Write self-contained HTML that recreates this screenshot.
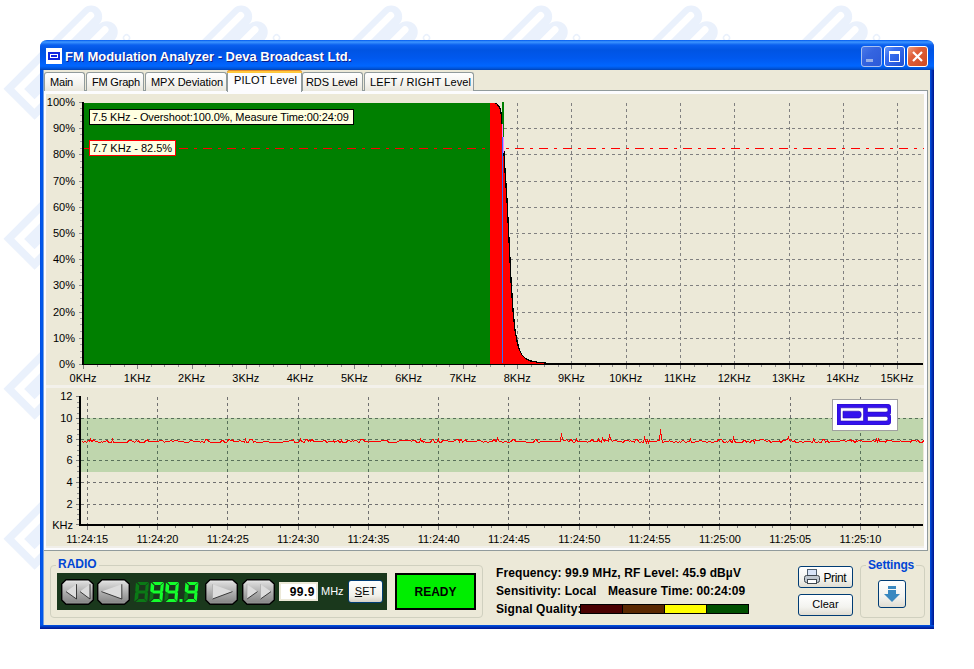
<!DOCTYPE html><html><head><meta charset="utf-8"><style>
*{margin:0;padding:0;box-sizing:border-box}
html,body{width:974px;height:669px;overflow:hidden;background:#fff;font-family:"Liberation Sans",sans-serif;font-size:11px;color:#000}
.ab{position:absolute}
.t{position:absolute;white-space:nowrap;line-height:1}
</style></head><body>
<svg class="ab" style="left:0;top:0" width="974" height="669"><g transform="translate(3.5,88.7) rotate(-45)"><path d="M0 0 H60 V44 H0 Z M7.6 7.6 V36 H56 V7.6 Z" fill-rule="evenodd" fill="#EAF1FC"/><path d="M14.5 14.8 H47 Q53 14.8 53 22 Q53 29.4 47 29.4 H14.5 Z" fill="#EAF1FC"/><path d="M56 0 H113 A11 11 0 0 1 113 22 A11 11 0 0 1 113 44 H56 Z M63 6.3 V13.3 H113.5 A3.5 3.5 0 0 0 113.5 6.3 Z M63 26.5 V33.5 H113.5 A3.5 3.5 0 0 0 113.5 26.5 Z" fill-rule="evenodd" fill="#EAF1FC"/><circle cx="123" cy="51" r="3" fill="none" stroke="#EAF1FC" stroke-width="1.5"/></g><g transform="translate(3.5,238.7) rotate(-45)"><path d="M0 0 H60 V44 H0 Z M7.6 7.6 V36 H56 V7.6 Z" fill-rule="evenodd" fill="#EAF1FC"/><path d="M14.5 14.8 H47 Q53 14.8 53 22 Q53 29.4 47 29.4 H14.5 Z" fill="#EAF1FC"/><path d="M56 0 H113 A11 11 0 0 1 113 22 A11 11 0 0 1 113 44 H56 Z M63 6.3 V13.3 H113.5 A3.5 3.5 0 0 0 113.5 6.3 Z M63 26.5 V33.5 H113.5 A3.5 3.5 0 0 0 113.5 26.5 Z" fill-rule="evenodd" fill="#EAF1FC"/><circle cx="123" cy="51" r="3" fill="none" stroke="#EAF1FC" stroke-width="1.5"/></g><g transform="translate(3.5,388.7) rotate(-45)"><path d="M0 0 H60 V44 H0 Z M7.6 7.6 V36 H56 V7.6 Z" fill-rule="evenodd" fill="#EAF1FC"/><path d="M14.5 14.8 H47 Q53 14.8 53 22 Q53 29.4 47 29.4 H14.5 Z" fill="#EAF1FC"/><path d="M56 0 H113 A11 11 0 0 1 113 22 A11 11 0 0 1 113 44 H56 Z M63 6.3 V13.3 H113.5 A3.5 3.5 0 0 0 113.5 6.3 Z M63 26.5 V33.5 H113.5 A3.5 3.5 0 0 0 113.5 26.5 Z" fill-rule="evenodd" fill="#EAF1FC"/><circle cx="123" cy="51" r="3" fill="none" stroke="#EAF1FC" stroke-width="1.5"/></g><g transform="translate(3.5,538.7) rotate(-45)"><path d="M0 0 H60 V44 H0 Z M7.6 7.6 V36 H56 V7.6 Z" fill-rule="evenodd" fill="#EAF1FC"/><path d="M14.5 14.8 H47 Q53 14.8 53 22 Q53 29.4 47 29.4 H14.5 Z" fill="#EAF1FC"/><path d="M56 0 H113 A11 11 0 0 1 113 22 A11 11 0 0 1 113 44 H56 Z M63 6.3 V13.3 H113.5 A3.5 3.5 0 0 0 113.5 6.3 Z M63 26.5 V33.5 H113.5 A3.5 3.5 0 0 0 113.5 26.5 Z" fill-rule="evenodd" fill="#EAF1FC"/><circle cx="123" cy="51" r="3" fill="none" stroke="#EAF1FC" stroke-width="1.5"/></g><g transform="translate(153.5,88.7) rotate(-45)"><path d="M0 0 H60 V44 H0 Z M7.6 7.6 V36 H56 V7.6 Z" fill-rule="evenodd" fill="#EAF1FC"/><path d="M14.5 14.8 H47 Q53 14.8 53 22 Q53 29.4 47 29.4 H14.5 Z" fill="#EAF1FC"/><path d="M56 0 H113 A11 11 0 0 1 113 22 A11 11 0 0 1 113 44 H56 Z M63 6.3 V13.3 H113.5 A3.5 3.5 0 0 0 113.5 6.3 Z M63 26.5 V33.5 H113.5 A3.5 3.5 0 0 0 113.5 26.5 Z" fill-rule="evenodd" fill="#EAF1FC"/><circle cx="123" cy="51" r="3" fill="none" stroke="#EAF1FC" stroke-width="1.5"/></g><g transform="translate(153.5,238.7) rotate(-45)"><path d="M0 0 H60 V44 H0 Z M7.6 7.6 V36 H56 V7.6 Z" fill-rule="evenodd" fill="#EAF1FC"/><path d="M14.5 14.8 H47 Q53 14.8 53 22 Q53 29.4 47 29.4 H14.5 Z" fill="#EAF1FC"/><path d="M56 0 H113 A11 11 0 0 1 113 22 A11 11 0 0 1 113 44 H56 Z M63 6.3 V13.3 H113.5 A3.5 3.5 0 0 0 113.5 6.3 Z M63 26.5 V33.5 H113.5 A3.5 3.5 0 0 0 113.5 26.5 Z" fill-rule="evenodd" fill="#EAF1FC"/><circle cx="123" cy="51" r="3" fill="none" stroke="#EAF1FC" stroke-width="1.5"/></g><g transform="translate(153.5,388.7) rotate(-45)"><path d="M0 0 H60 V44 H0 Z M7.6 7.6 V36 H56 V7.6 Z" fill-rule="evenodd" fill="#EAF1FC"/><path d="M14.5 14.8 H47 Q53 14.8 53 22 Q53 29.4 47 29.4 H14.5 Z" fill="#EAF1FC"/><path d="M56 0 H113 A11 11 0 0 1 113 22 A11 11 0 0 1 113 44 H56 Z M63 6.3 V13.3 H113.5 A3.5 3.5 0 0 0 113.5 6.3 Z M63 26.5 V33.5 H113.5 A3.5 3.5 0 0 0 113.5 26.5 Z" fill-rule="evenodd" fill="#EAF1FC"/><circle cx="123" cy="51" r="3" fill="none" stroke="#EAF1FC" stroke-width="1.5"/></g><g transform="translate(153.5,538.7) rotate(-45)"><path d="M0 0 H60 V44 H0 Z M7.6 7.6 V36 H56 V7.6 Z" fill-rule="evenodd" fill="#EAF1FC"/><path d="M14.5 14.8 H47 Q53 14.8 53 22 Q53 29.4 47 29.4 H14.5 Z" fill="#EAF1FC"/><path d="M56 0 H113 A11 11 0 0 1 113 22 A11 11 0 0 1 113 44 H56 Z M63 6.3 V13.3 H113.5 A3.5 3.5 0 0 0 113.5 6.3 Z M63 26.5 V33.5 H113.5 A3.5 3.5 0 0 0 113.5 26.5 Z" fill-rule="evenodd" fill="#EAF1FC"/><circle cx="123" cy="51" r="3" fill="none" stroke="#EAF1FC" stroke-width="1.5"/></g><g transform="translate(303.5,88.7) rotate(-45)"><path d="M0 0 H60 V44 H0 Z M7.6 7.6 V36 H56 V7.6 Z" fill-rule="evenodd" fill="#EAF1FC"/><path d="M14.5 14.8 H47 Q53 14.8 53 22 Q53 29.4 47 29.4 H14.5 Z" fill="#EAF1FC"/><path d="M56 0 H113 A11 11 0 0 1 113 22 A11 11 0 0 1 113 44 H56 Z M63 6.3 V13.3 H113.5 A3.5 3.5 0 0 0 113.5 6.3 Z M63 26.5 V33.5 H113.5 A3.5 3.5 0 0 0 113.5 26.5 Z" fill-rule="evenodd" fill="#EAF1FC"/><circle cx="123" cy="51" r="3" fill="none" stroke="#EAF1FC" stroke-width="1.5"/></g><g transform="translate(303.5,238.7) rotate(-45)"><path d="M0 0 H60 V44 H0 Z M7.6 7.6 V36 H56 V7.6 Z" fill-rule="evenodd" fill="#EAF1FC"/><path d="M14.5 14.8 H47 Q53 14.8 53 22 Q53 29.4 47 29.4 H14.5 Z" fill="#EAF1FC"/><path d="M56 0 H113 A11 11 0 0 1 113 22 A11 11 0 0 1 113 44 H56 Z M63 6.3 V13.3 H113.5 A3.5 3.5 0 0 0 113.5 6.3 Z M63 26.5 V33.5 H113.5 A3.5 3.5 0 0 0 113.5 26.5 Z" fill-rule="evenodd" fill="#EAF1FC"/><circle cx="123" cy="51" r="3" fill="none" stroke="#EAF1FC" stroke-width="1.5"/></g><g transform="translate(303.5,388.7) rotate(-45)"><path d="M0 0 H60 V44 H0 Z M7.6 7.6 V36 H56 V7.6 Z" fill-rule="evenodd" fill="#EAF1FC"/><path d="M14.5 14.8 H47 Q53 14.8 53 22 Q53 29.4 47 29.4 H14.5 Z" fill="#EAF1FC"/><path d="M56 0 H113 A11 11 0 0 1 113 22 A11 11 0 0 1 113 44 H56 Z M63 6.3 V13.3 H113.5 A3.5 3.5 0 0 0 113.5 6.3 Z M63 26.5 V33.5 H113.5 A3.5 3.5 0 0 0 113.5 26.5 Z" fill-rule="evenodd" fill="#EAF1FC"/><circle cx="123" cy="51" r="3" fill="none" stroke="#EAF1FC" stroke-width="1.5"/></g><g transform="translate(303.5,538.7) rotate(-45)"><path d="M0 0 H60 V44 H0 Z M7.6 7.6 V36 H56 V7.6 Z" fill-rule="evenodd" fill="#EAF1FC"/><path d="M14.5 14.8 H47 Q53 14.8 53 22 Q53 29.4 47 29.4 H14.5 Z" fill="#EAF1FC"/><path d="M56 0 H113 A11 11 0 0 1 113 22 A11 11 0 0 1 113 44 H56 Z M63 6.3 V13.3 H113.5 A3.5 3.5 0 0 0 113.5 6.3 Z M63 26.5 V33.5 H113.5 A3.5 3.5 0 0 0 113.5 26.5 Z" fill-rule="evenodd" fill="#EAF1FC"/><circle cx="123" cy="51" r="3" fill="none" stroke="#EAF1FC" stroke-width="1.5"/></g><g transform="translate(453.5,88.7) rotate(-45)"><path d="M0 0 H60 V44 H0 Z M7.6 7.6 V36 H56 V7.6 Z" fill-rule="evenodd" fill="#EAF1FC"/><path d="M14.5 14.8 H47 Q53 14.8 53 22 Q53 29.4 47 29.4 H14.5 Z" fill="#EAF1FC"/><path d="M56 0 H113 A11 11 0 0 1 113 22 A11 11 0 0 1 113 44 H56 Z M63 6.3 V13.3 H113.5 A3.5 3.5 0 0 0 113.5 6.3 Z M63 26.5 V33.5 H113.5 A3.5 3.5 0 0 0 113.5 26.5 Z" fill-rule="evenodd" fill="#EAF1FC"/><circle cx="123" cy="51" r="3" fill="none" stroke="#EAF1FC" stroke-width="1.5"/></g><g transform="translate(453.5,238.7) rotate(-45)"><path d="M0 0 H60 V44 H0 Z M7.6 7.6 V36 H56 V7.6 Z" fill-rule="evenodd" fill="#EAF1FC"/><path d="M14.5 14.8 H47 Q53 14.8 53 22 Q53 29.4 47 29.4 H14.5 Z" fill="#EAF1FC"/><path d="M56 0 H113 A11 11 0 0 1 113 22 A11 11 0 0 1 113 44 H56 Z M63 6.3 V13.3 H113.5 A3.5 3.5 0 0 0 113.5 6.3 Z M63 26.5 V33.5 H113.5 A3.5 3.5 0 0 0 113.5 26.5 Z" fill-rule="evenodd" fill="#EAF1FC"/><circle cx="123" cy="51" r="3" fill="none" stroke="#EAF1FC" stroke-width="1.5"/></g><g transform="translate(453.5,388.7) rotate(-45)"><path d="M0 0 H60 V44 H0 Z M7.6 7.6 V36 H56 V7.6 Z" fill-rule="evenodd" fill="#EAF1FC"/><path d="M14.5 14.8 H47 Q53 14.8 53 22 Q53 29.4 47 29.4 H14.5 Z" fill="#EAF1FC"/><path d="M56 0 H113 A11 11 0 0 1 113 22 A11 11 0 0 1 113 44 H56 Z M63 6.3 V13.3 H113.5 A3.5 3.5 0 0 0 113.5 6.3 Z M63 26.5 V33.5 H113.5 A3.5 3.5 0 0 0 113.5 26.5 Z" fill-rule="evenodd" fill="#EAF1FC"/><circle cx="123" cy="51" r="3" fill="none" stroke="#EAF1FC" stroke-width="1.5"/></g><g transform="translate(453.5,538.7) rotate(-45)"><path d="M0 0 H60 V44 H0 Z M7.6 7.6 V36 H56 V7.6 Z" fill-rule="evenodd" fill="#EAF1FC"/><path d="M14.5 14.8 H47 Q53 14.8 53 22 Q53 29.4 47 29.4 H14.5 Z" fill="#EAF1FC"/><path d="M56 0 H113 A11 11 0 0 1 113 22 A11 11 0 0 1 113 44 H56 Z M63 6.3 V13.3 H113.5 A3.5 3.5 0 0 0 113.5 6.3 Z M63 26.5 V33.5 H113.5 A3.5 3.5 0 0 0 113.5 26.5 Z" fill-rule="evenodd" fill="#EAF1FC"/><circle cx="123" cy="51" r="3" fill="none" stroke="#EAF1FC" stroke-width="1.5"/></g><g transform="translate(603.5,88.7) rotate(-45)"><path d="M0 0 H60 V44 H0 Z M7.6 7.6 V36 H56 V7.6 Z" fill-rule="evenodd" fill="#EAF1FC"/><path d="M14.5 14.8 H47 Q53 14.8 53 22 Q53 29.4 47 29.4 H14.5 Z" fill="#EAF1FC"/><path d="M56 0 H113 A11 11 0 0 1 113 22 A11 11 0 0 1 113 44 H56 Z M63 6.3 V13.3 H113.5 A3.5 3.5 0 0 0 113.5 6.3 Z M63 26.5 V33.5 H113.5 A3.5 3.5 0 0 0 113.5 26.5 Z" fill-rule="evenodd" fill="#EAF1FC"/><circle cx="123" cy="51" r="3" fill="none" stroke="#EAF1FC" stroke-width="1.5"/></g><g transform="translate(603.5,238.7) rotate(-45)"><path d="M0 0 H60 V44 H0 Z M7.6 7.6 V36 H56 V7.6 Z" fill-rule="evenodd" fill="#EAF1FC"/><path d="M14.5 14.8 H47 Q53 14.8 53 22 Q53 29.4 47 29.4 H14.5 Z" fill="#EAF1FC"/><path d="M56 0 H113 A11 11 0 0 1 113 22 A11 11 0 0 1 113 44 H56 Z M63 6.3 V13.3 H113.5 A3.5 3.5 0 0 0 113.5 6.3 Z M63 26.5 V33.5 H113.5 A3.5 3.5 0 0 0 113.5 26.5 Z" fill-rule="evenodd" fill="#EAF1FC"/><circle cx="123" cy="51" r="3" fill="none" stroke="#EAF1FC" stroke-width="1.5"/></g><g transform="translate(603.5,388.7) rotate(-45)"><path d="M0 0 H60 V44 H0 Z M7.6 7.6 V36 H56 V7.6 Z" fill-rule="evenodd" fill="#EAF1FC"/><path d="M14.5 14.8 H47 Q53 14.8 53 22 Q53 29.4 47 29.4 H14.5 Z" fill="#EAF1FC"/><path d="M56 0 H113 A11 11 0 0 1 113 22 A11 11 0 0 1 113 44 H56 Z M63 6.3 V13.3 H113.5 A3.5 3.5 0 0 0 113.5 6.3 Z M63 26.5 V33.5 H113.5 A3.5 3.5 0 0 0 113.5 26.5 Z" fill-rule="evenodd" fill="#EAF1FC"/><circle cx="123" cy="51" r="3" fill="none" stroke="#EAF1FC" stroke-width="1.5"/></g><g transform="translate(603.5,538.7) rotate(-45)"><path d="M0 0 H60 V44 H0 Z M7.6 7.6 V36 H56 V7.6 Z" fill-rule="evenodd" fill="#EAF1FC"/><path d="M14.5 14.8 H47 Q53 14.8 53 22 Q53 29.4 47 29.4 H14.5 Z" fill="#EAF1FC"/><path d="M56 0 H113 A11 11 0 0 1 113 22 A11 11 0 0 1 113 44 H56 Z M63 6.3 V13.3 H113.5 A3.5 3.5 0 0 0 113.5 6.3 Z M63 26.5 V33.5 H113.5 A3.5 3.5 0 0 0 113.5 26.5 Z" fill-rule="evenodd" fill="#EAF1FC"/><circle cx="123" cy="51" r="3" fill="none" stroke="#EAF1FC" stroke-width="1.5"/></g><g transform="translate(753.5,88.7) rotate(-45)"><path d="M0 0 H60 V44 H0 Z M7.6 7.6 V36 H56 V7.6 Z" fill-rule="evenodd" fill="#EAF1FC"/><path d="M14.5 14.8 H47 Q53 14.8 53 22 Q53 29.4 47 29.4 H14.5 Z" fill="#EAF1FC"/><path d="M56 0 H113 A11 11 0 0 1 113 22 A11 11 0 0 1 113 44 H56 Z M63 6.3 V13.3 H113.5 A3.5 3.5 0 0 0 113.5 6.3 Z M63 26.5 V33.5 H113.5 A3.5 3.5 0 0 0 113.5 26.5 Z" fill-rule="evenodd" fill="#EAF1FC"/><circle cx="123" cy="51" r="3" fill="none" stroke="#EAF1FC" stroke-width="1.5"/></g><g transform="translate(753.5,238.7) rotate(-45)"><path d="M0 0 H60 V44 H0 Z M7.6 7.6 V36 H56 V7.6 Z" fill-rule="evenodd" fill="#EAF1FC"/><path d="M14.5 14.8 H47 Q53 14.8 53 22 Q53 29.4 47 29.4 H14.5 Z" fill="#EAF1FC"/><path d="M56 0 H113 A11 11 0 0 1 113 22 A11 11 0 0 1 113 44 H56 Z M63 6.3 V13.3 H113.5 A3.5 3.5 0 0 0 113.5 6.3 Z M63 26.5 V33.5 H113.5 A3.5 3.5 0 0 0 113.5 26.5 Z" fill-rule="evenodd" fill="#EAF1FC"/><circle cx="123" cy="51" r="3" fill="none" stroke="#EAF1FC" stroke-width="1.5"/></g><g transform="translate(753.5,388.7) rotate(-45)"><path d="M0 0 H60 V44 H0 Z M7.6 7.6 V36 H56 V7.6 Z" fill-rule="evenodd" fill="#EAF1FC"/><path d="M14.5 14.8 H47 Q53 14.8 53 22 Q53 29.4 47 29.4 H14.5 Z" fill="#EAF1FC"/><path d="M56 0 H113 A11 11 0 0 1 113 22 A11 11 0 0 1 113 44 H56 Z M63 6.3 V13.3 H113.5 A3.5 3.5 0 0 0 113.5 6.3 Z M63 26.5 V33.5 H113.5 A3.5 3.5 0 0 0 113.5 26.5 Z" fill-rule="evenodd" fill="#EAF1FC"/><circle cx="123" cy="51" r="3" fill="none" stroke="#EAF1FC" stroke-width="1.5"/></g><g transform="translate(753.5,538.7) rotate(-45)"><path d="M0 0 H60 V44 H0 Z M7.6 7.6 V36 H56 V7.6 Z" fill-rule="evenodd" fill="#EAF1FC"/><path d="M14.5 14.8 H47 Q53 14.8 53 22 Q53 29.4 47 29.4 H14.5 Z" fill="#EAF1FC"/><path d="M56 0 H113 A11 11 0 0 1 113 22 A11 11 0 0 1 113 44 H56 Z M63 6.3 V13.3 H113.5 A3.5 3.5 0 0 0 113.5 6.3 Z M63 26.5 V33.5 H113.5 A3.5 3.5 0 0 0 113.5 26.5 Z" fill-rule="evenodd" fill="#EAF1FC"/><circle cx="123" cy="51" r="3" fill="none" stroke="#EAF1FC" stroke-width="1.5"/></g></svg>
<div class="ab" style="left:40px;top:40px;width:894px;height:589px;background:linear-gradient(90deg,#0046d8 0,#0058ee 1px,#0055e5 3px,#ECE9D8 4px,#ECE9D8 890px,#0050e0 890px,#00138c 894px);border-radius:7px 7px 0 0"></div>
<div class="ab" style="left:40px;top:625px;width:894px;height:4px;background:linear-gradient(180deg,#0055e5,#00138c)"></div>
<div class="ab" style="left:40px;top:40px;width:894px;height:30px;border-radius:7px 7px 0 0;background:linear-gradient(180deg,#0058ee 0,#3d95ff 2px,#0a5fef 5px,#0054e3 10px,#0058ee 18px,#0066ff 26px,#0050d0 29px,#0040b0 30px)"></div>
<div class="ab" style="left:46px;top:48px;width:16px;height:16px;background:#fff"></div>
<div class="ab" style="left:48px;top:52px;width:12px;height:8px;background:#1028e0"></div>
<div class="ab" style="left:50px;top:54px;width:8px;height:4px;background:#fff"></div>
<div class="ab" style="left:51px;top:55px;width:6px;height:2px;background:#1028e0"></div>
<div class="t" style="left:65px;top:50px;font-size:13px;font-weight:bold;color:#fff;text-shadow:1px 1px 0 #0a1e8c;letter-spacing:0px">FM Modulation Analyzer - Deva Broadcast Ltd.</div>
<div class="ab" style="left:861px;top:46px;width:21px;height:21px;border:1px solid #a8c0f0;border-radius:3px;background:linear-gradient(135deg,#4a78e8 0,#3464e0 40%,#2c5ad8 100%)"></div>
<div class="ab" style="left:884px;top:46px;width:21px;height:21px;border:1px solid #fff;border-radius:3px;background:linear-gradient(135deg,#6d9cf8 0,#3a6ff0 30%,#2a5de0 70%,#2050d0 100%)"></div>
<div class="ab" style="left:907px;top:46px;width:21px;height:21px;border:1px solid #fff;border-radius:3px;background:linear-gradient(135deg,#f0a080 0,#e0603a 35%,#d04a20 100%)"></div>
<div class="ab" style="left:866px;top:59px;width:7px;height:3px;background:#98b0e8"></div>
<div class="ab" style="left:889px;top:51px;width:11px;height:11px;border:1px solid #fff;border-top-width:3px"></div>
<svg class="ab" style="left:907px;top:46px" width="21" height="21"><path d="M6 6 L15 15 M15 6 L6 15" stroke="#fff" stroke-width="2.2"/></svg>
<div class="ab" style="left:44px;top:90px;width:884px;height:1px;background:#919b9c"></div>
<div class="ab" style="left:927px;top:90px;width:1px;height:461px;background:#919b9c"></div>
<div class="ab" style="left:44px;top:91px;width:883px;height:3px;background:#fcfcfe"></div>
<div class="ab" style="left:924px;top:91px;width:3px;height:459px;background:#fcfcfe"></div>
<div class="ab" style="left:44px;top:91px;width:2px;height:459px;background:#fcfcfe"></div>
<div class="ab" style="left:44px;top:72px;width:41px;height:19px;background:linear-gradient(180deg,#fff 0,#f4f3ee 60%,#e8e6dc 100%);border:1px solid #919b9c;border-bottom:none;border-radius:3px 3px 0 0"></div>
<div class="t" style="left:50px;top:77px;font-size:11px;letter-spacing:-0.2px">Main</div>
<div class="ab" style="left:86px;top:72px;width:58px;height:19px;background:linear-gradient(180deg,#fff 0,#f4f3ee 60%,#e8e6dc 100%);border:1px solid #919b9c;border-bottom:none;border-radius:3px 3px 0 0"></div>
<div class="t" style="left:92px;top:77px;font-size:11px;letter-spacing:-0.2px">FM Graph</div>
<div class="ab" style="left:145px;top:72px;width:82px;height:19px;background:linear-gradient(180deg,#fff 0,#f4f3ee 60%,#e8e6dc 100%);border:1px solid #919b9c;border-bottom:none;border-radius:3px 3px 0 0"></div>
<div class="t" style="left:151px;top:77px;font-size:11px;letter-spacing:-0.05px">MPX Deviation</div>
<div class="ab" style="left:302px;top:72px;width:61px;height:19px;background:linear-gradient(180deg,#fff 0,#f4f3ee 60%,#e8e6dc 100%);border:1px solid #919b9c;border-bottom:none;border-radius:3px 3px 0 0"></div>
<div class="t" style="left:306px;top:77px;font-size:11px;letter-spacing:-0.1px">RDS Level</div>
<div class="ab" style="left:364px;top:72px;width:110px;height:19px;background:linear-gradient(180deg,#fff 0,#f4f3ee 60%,#e8e6dc 100%);border:1px solid #919b9c;border-bottom:none;border-radius:3px 3px 0 0"></div>
<div class="t" style="left:370px;top:77px;font-size:11px;letter-spacing:0.1px">LEFT / RIGHT Level</div>
<div class="ab" style="left:227px;top:70px;width:75px;height:22px;background:#fcfcfe;border:1px solid #919b9c;border-bottom:none;border-radius:3px 3px 0 0"></div>
<div class="ab" style="left:227px;top:70px;width:75px;height:3px;background:#ffc83c;border-radius:3px 3px 0 0;border-top:1px solid #e68b2c"></div>
<div class="t" style="left:234px;top:74.5px;font-size:11px;letter-spacing:0.2px">PILOT Level</div>
<svg class="ab" style="left:0;top:0" width="974" height="669" shape-rendering="crispEdges"><line x1="137.5" y1="103" x2="137.5" y2="363" stroke="#808080" stroke-dasharray="3 3"/><line x1="192.5" y1="103" x2="192.5" y2="363" stroke="#808080" stroke-dasharray="3 3"/><line x1="246.5" y1="103" x2="246.5" y2="363" stroke="#808080" stroke-dasharray="3 3"/><line x1="300.5" y1="103" x2="300.5" y2="363" stroke="#808080" stroke-dasharray="3 3"/><line x1="354.5" y1="103" x2="354.5" y2="363" stroke="#808080" stroke-dasharray="3 3"/><line x1="409.5" y1="103" x2="409.5" y2="363" stroke="#808080" stroke-dasharray="3 3"/><line x1="463.5" y1="103" x2="463.5" y2="363" stroke="#808080" stroke-dasharray="3 3"/><line x1="517.5" y1="103" x2="517.5" y2="363" stroke="#808080" stroke-dasharray="3 3"/><line x1="571.5" y1="103" x2="571.5" y2="363" stroke="#808080" stroke-dasharray="3 3"/><line x1="626.5" y1="103" x2="626.5" y2="363" stroke="#808080" stroke-dasharray="3 3"/><line x1="680.5" y1="103" x2="680.5" y2="363" stroke="#808080" stroke-dasharray="3 3"/><line x1="734.5" y1="103" x2="734.5" y2="363" stroke="#808080" stroke-dasharray="3 3"/><line x1="789.5" y1="103" x2="789.5" y2="363" stroke="#808080" stroke-dasharray="3 3"/><line x1="843.5" y1="103" x2="843.5" y2="363" stroke="#808080" stroke-dasharray="3 3"/><line x1="897.5" y1="103" x2="897.5" y2="363" stroke="#808080" stroke-dasharray="3 3"/><line x1="84" y1="338.5" x2="922" y2="338.5" stroke="#808080" stroke-dasharray="3 3"/><line x1="84" y1="312.5" x2="922" y2="312.5" stroke="#808080" stroke-dasharray="3 3"/><line x1="84" y1="285.5" x2="922" y2="285.5" stroke="#808080" stroke-dasharray="3 3"/><line x1="84" y1="259.5" x2="922" y2="259.5" stroke="#808080" stroke-dasharray="3 3"/><line x1="84" y1="233.5" x2="922" y2="233.5" stroke="#808080" stroke-dasharray="3 3"/><line x1="84" y1="207.5" x2="922" y2="207.5" stroke="#808080" stroke-dasharray="3 3"/><line x1="84" y1="181.5" x2="922" y2="181.5" stroke="#808080" stroke-dasharray="3 3"/><line x1="84" y1="154.5" x2="922" y2="154.5" stroke="#808080" stroke-dasharray="3 3"/><line x1="84" y1="128.5" x2="922" y2="128.5" stroke="#808080" stroke-dasharray="3 3"/><rect x="82" y="363" width="841" height="2" fill="#000"/><rect x="84" y="103" width="406" height="261" fill="#007f00"/><path d="M490 103 L495 103 L497 104 L499 106.5 L500.5 110 L501.5 116 L502.2 124 L503 140 L504 153 L505 170 L507 200 L509 240 L511 280 L513 310 L515 330 L517 341 L519 349 L522 355 L526 359 L531 361 L538 362.3 L546 363 L546 364 L490 364 Z" fill="#ff0000"/><path d="M495 103 L497 104 L499 106.5 L500.5 110 L501.5 116 L502.2 124 L503 140 L504 153 L505 170 L507 200 L509 240 L511 280 L513 310 L515 330 L517 341 L519 349 L522 355 L526 359 L531 361 L538 362.3 L546 363" fill="none" stroke="#000" stroke-width="1.3"/><rect x="502" y="102" width="2" height="22" fill="#007f00"/><rect x="503" y="124" width="1" height="13" fill="#007f00"/><rect x="502" y="124" width="1" height="13" fill="#ff80ff"/><rect x="503" y="137" width="1" height="16" fill="#ff80ff"/><rect x="502" y="137" width="1" height="226" fill="#3070ff"/><line x1="84" y1="148.5" x2="924" y2="148.5" stroke="#ff0000" stroke-width="1" stroke-dasharray="9 6 3 6" stroke-dashoffset="1"/><rect x="82" y="102" width="2" height="263" fill="#000"/><line x1="79" y1="364.5" x2="82" y2="364.5" stroke="#909090"/><line x1="80" y1="357.5" x2="82" y2="357.5" stroke="#a0a0a0"/><line x1="80" y1="351.5" x2="82" y2="351.5" stroke="#a0a0a0"/><line x1="80" y1="344.5" x2="82" y2="344.5" stroke="#a0a0a0"/><line x1="79" y1="338.5" x2="82" y2="338.5" stroke="#909090"/><line x1="80" y1="331.5" x2="82" y2="331.5" stroke="#a0a0a0"/><line x1="80" y1="324.5" x2="82" y2="324.5" stroke="#a0a0a0"/><line x1="80" y1="318.5" x2="82" y2="318.5" stroke="#a0a0a0"/><line x1="79" y1="312.5" x2="82" y2="312.5" stroke="#909090"/><line x1="80" y1="305.5" x2="82" y2="305.5" stroke="#a0a0a0"/><line x1="80" y1="298.5" x2="82" y2="298.5" stroke="#a0a0a0"/><line x1="80" y1="292.5" x2="82" y2="292.5" stroke="#a0a0a0"/><line x1="79" y1="285.5" x2="82" y2="285.5" stroke="#909090"/><line x1="80" y1="279.5" x2="82" y2="279.5" stroke="#a0a0a0"/><line x1="80" y1="272.5" x2="82" y2="272.5" stroke="#a0a0a0"/><line x1="80" y1="265.5" x2="82" y2="265.5" stroke="#a0a0a0"/><line x1="79" y1="259.5" x2="82" y2="259.5" stroke="#909090"/><line x1="80" y1="252.5" x2="82" y2="252.5" stroke="#a0a0a0"/><line x1="80" y1="246.5" x2="82" y2="246.5" stroke="#a0a0a0"/><line x1="80" y1="239.5" x2="82" y2="239.5" stroke="#a0a0a0"/><line x1="79" y1="233.5" x2="82" y2="233.5" stroke="#909090"/><line x1="80" y1="226.5" x2="82" y2="226.5" stroke="#a0a0a0"/><line x1="80" y1="220.5" x2="82" y2="220.5" stroke="#a0a0a0"/><line x1="80" y1="213.5" x2="82" y2="213.5" stroke="#a0a0a0"/><line x1="79" y1="207.5" x2="82" y2="207.5" stroke="#909090"/><line x1="80" y1="200.5" x2="82" y2="200.5" stroke="#a0a0a0"/><line x1="80" y1="193.5" x2="82" y2="193.5" stroke="#a0a0a0"/><line x1="80" y1="187.5" x2="82" y2="187.5" stroke="#a0a0a0"/><line x1="79" y1="181.5" x2="82" y2="181.5" stroke="#909090"/><line x1="80" y1="174.5" x2="82" y2="174.5" stroke="#a0a0a0"/><line x1="80" y1="167.5" x2="82" y2="167.5" stroke="#a0a0a0"/><line x1="80" y1="161.5" x2="82" y2="161.5" stroke="#a0a0a0"/><line x1="79" y1="154.5" x2="82" y2="154.5" stroke="#909090"/><line x1="80" y1="148.5" x2="82" y2="148.5" stroke="#a0a0a0"/><line x1="80" y1="141.5" x2="82" y2="141.5" stroke="#a0a0a0"/><line x1="80" y1="134.5" x2="82" y2="134.5" stroke="#a0a0a0"/><line x1="79" y1="128.5" x2="82" y2="128.5" stroke="#909090"/><line x1="80" y1="121.5" x2="82" y2="121.5" stroke="#a0a0a0"/><line x1="80" y1="115.5" x2="82" y2="115.5" stroke="#a0a0a0"/><line x1="80" y1="108.5" x2="82" y2="108.5" stroke="#a0a0a0"/><line x1="79" y1="102.5" x2="82" y2="102.5" stroke="#909090"/><line x1="83.5" y1="365" x2="83.5" y2="369" stroke="#808080"/><line x1="97.5" y1="365" x2="97.5" y2="367" stroke="#909090"/><line x1="110.5" y1="365" x2="110.5" y2="367" stroke="#909090"/><line x1="124.5" y1="365" x2="124.5" y2="367" stroke="#909090"/><line x1="137.5" y1="365" x2="137.5" y2="369" stroke="#808080"/><line x1="151.5" y1="365" x2="151.5" y2="367" stroke="#909090"/><line x1="164.5" y1="365" x2="164.5" y2="367" stroke="#909090"/><line x1="178.5" y1="365" x2="178.5" y2="367" stroke="#909090"/><line x1="192.5" y1="365" x2="192.5" y2="369" stroke="#808080"/><line x1="205.5" y1="365" x2="205.5" y2="367" stroke="#909090"/><line x1="219.5" y1="365" x2="219.5" y2="367" stroke="#909090"/><line x1="232.5" y1="365" x2="232.5" y2="367" stroke="#909090"/><line x1="246.5" y1="365" x2="246.5" y2="369" stroke="#808080"/><line x1="259.5" y1="365" x2="259.5" y2="367" stroke="#909090"/><line x1="273.5" y1="365" x2="273.5" y2="367" stroke="#909090"/><line x1="287.5" y1="365" x2="287.5" y2="367" stroke="#909090"/><line x1="300.5" y1="365" x2="300.5" y2="369" stroke="#808080"/><line x1="314.5" y1="365" x2="314.5" y2="367" stroke="#909090"/><line x1="327.5" y1="365" x2="327.5" y2="367" stroke="#909090"/><line x1="341.5" y1="365" x2="341.5" y2="367" stroke="#909090"/><line x1="354.5" y1="365" x2="354.5" y2="369" stroke="#808080"/><line x1="368.5" y1="365" x2="368.5" y2="367" stroke="#909090"/><line x1="381.5" y1="365" x2="381.5" y2="367" stroke="#909090"/><line x1="395.5" y1="365" x2="395.5" y2="367" stroke="#909090"/><line x1="409.5" y1="365" x2="409.5" y2="369" stroke="#808080"/><line x1="422.5" y1="365" x2="422.5" y2="367" stroke="#909090"/><line x1="436.5" y1="365" x2="436.5" y2="367" stroke="#909090"/><line x1="449.5" y1="365" x2="449.5" y2="367" stroke="#909090"/><line x1="463.5" y1="365" x2="463.5" y2="369" stroke="#808080"/><line x1="476.5" y1="365" x2="476.5" y2="367" stroke="#909090"/><line x1="490.5" y1="365" x2="490.5" y2="367" stroke="#909090"/><line x1="504.5" y1="365" x2="504.5" y2="367" stroke="#909090"/><line x1="517.5" y1="365" x2="517.5" y2="369" stroke="#808080"/><line x1="531.5" y1="365" x2="531.5" y2="367" stroke="#909090"/><line x1="544.5" y1="365" x2="544.5" y2="367" stroke="#909090"/><line x1="558.5" y1="365" x2="558.5" y2="367" stroke="#909090"/><line x1="571.5" y1="365" x2="571.5" y2="369" stroke="#808080"/><line x1="585.5" y1="365" x2="585.5" y2="367" stroke="#909090"/><line x1="599.5" y1="365" x2="599.5" y2="367" stroke="#909090"/><line x1="612.5" y1="365" x2="612.5" y2="367" stroke="#909090"/><line x1="626.5" y1="365" x2="626.5" y2="369" stroke="#808080"/><line x1="639.5" y1="365" x2="639.5" y2="367" stroke="#909090"/><line x1="653.5" y1="365" x2="653.5" y2="367" stroke="#909090"/><line x1="666.5" y1="365" x2="666.5" y2="367" stroke="#909090"/><line x1="680.5" y1="365" x2="680.5" y2="369" stroke="#808080"/><line x1="694.5" y1="365" x2="694.5" y2="367" stroke="#909090"/><line x1="707.5" y1="365" x2="707.5" y2="367" stroke="#909090"/><line x1="721.5" y1="365" x2="721.5" y2="367" stroke="#909090"/><line x1="734.5" y1="365" x2="734.5" y2="369" stroke="#808080"/><line x1="748.5" y1="365" x2="748.5" y2="367" stroke="#909090"/><line x1="761.5" y1="365" x2="761.5" y2="367" stroke="#909090"/><line x1="775.5" y1="365" x2="775.5" y2="367" stroke="#909090"/><line x1="789.5" y1="365" x2="789.5" y2="369" stroke="#808080"/><line x1="802.5" y1="365" x2="802.5" y2="367" stroke="#909090"/><line x1="816.5" y1="365" x2="816.5" y2="367" stroke="#909090"/><line x1="829.5" y1="365" x2="829.5" y2="367" stroke="#909090"/><line x1="843.5" y1="365" x2="843.5" y2="369" stroke="#808080"/><line x1="856.5" y1="365" x2="856.5" y2="367" stroke="#909090"/><line x1="870.5" y1="365" x2="870.5" y2="367" stroke="#909090"/><line x1="883.5" y1="365" x2="883.5" y2="367" stroke="#909090"/><line x1="897.5" y1="365" x2="897.5" y2="369" stroke="#808080"/></svg>
<div class="t" style="left:30px;width:45px;text-align:right;top:358.5px">0%</div>
<div class="t" style="left:30px;width:45px;text-align:right;top:332.5px">10%</div>
<div class="t" style="left:30px;width:45px;text-align:right;top:306.5px">20%</div>
<div class="t" style="left:30px;width:45px;text-align:right;top:279.5px">30%</div>
<div class="t" style="left:30px;width:45px;text-align:right;top:253.5px">40%</div>
<div class="t" style="left:30px;width:45px;text-align:right;top:227.5px">50%</div>
<div class="t" style="left:30px;width:45px;text-align:right;top:201.5px">60%</div>
<div class="t" style="left:30px;width:45px;text-align:right;top:175.5px">70%</div>
<div class="t" style="left:30px;width:45px;text-align:right;top:148.5px">80%</div>
<div class="t" style="left:30px;width:45px;text-align:right;top:122.5px">90%</div>
<div class="t" style="left:30px;width:45px;text-align:right;top:96.5px">100%</div>
<div class="t" style="left:58.0px;width:50px;text-align:center;top:373px">0KHz</div>
<div class="t" style="left:112.3px;width:50px;text-align:center;top:373px">1KHz</div>
<div class="t" style="left:166.5px;width:50px;text-align:center;top:373px">2KHz</div>
<div class="t" style="left:220.8px;width:50px;text-align:center;top:373px">3KHz</div>
<div class="t" style="left:275.1px;width:50px;text-align:center;top:373px">4KHz</div>
<div class="t" style="left:329.4px;width:50px;text-align:center;top:373px">5KHz</div>
<div class="t" style="left:383.6px;width:50px;text-align:center;top:373px">6KHz</div>
<div class="t" style="left:437.9px;width:50px;text-align:center;top:373px">7KHz</div>
<div class="t" style="left:492.2px;width:50px;text-align:center;top:373px">8KHz</div>
<div class="t" style="left:546.4px;width:50px;text-align:center;top:373px">9KHz</div>
<div class="t" style="left:600.7px;width:50px;text-align:center;top:373px">10KHz</div>
<div class="t" style="left:655.0px;width:50px;text-align:center;top:373px">11KHz</div>
<div class="t" style="left:709.2px;width:50px;text-align:center;top:373px">12KHz</div>
<div class="t" style="left:763.5px;width:50px;text-align:center;top:373px">13KHz</div>
<div class="t" style="left:817.8px;width:50px;text-align:center;top:373px">14KHz</div>
<div class="t" style="left:872.1px;width:50px;text-align:center;top:373px">15KHz</div>
<div class="t" style="left:89px;top:109px;height:16px;padding:2px 4px 0 2px;background:#ffffe1;border:1px solid #000;letter-spacing:-0.1px">7.5 KHz - Overshoot:100.0%, Measure Time:00:24:09</div>
<div class="ab" style="left:84px;top:148px;width:6px;height:1px;background:#ff0000"></div>
<div class="t" style="left:89px;top:140px;height:16px;padding:2px 3px 0 2px;background:#ffffe1;border:1px solid #ff0000">7.7 KHz - 82.5%</div>
<div class="ab" style="left:46px;top:385px;width:878px;height:3px;background:#f3f1eb"></div>
<svg class="ab" style="left:0;top:0" width="974" height="669" shape-rendering="crispEdges"><rect x="81" y="418" width="842" height="54" fill="#bfd6ad"/><line x1="87.5" y1="397" x2="87.5" y2="418" stroke="#707070" stroke-dasharray="3 3"/><line x1="87.5" y1="418" x2="87.5" y2="472" stroke="#58705a" stroke-dasharray="3 3" stroke-dashoffset="3"/><line x1="87.5" y1="472" x2="87.5" y2="524" stroke="#707070" stroke-dasharray="3 3" stroke-dashoffset="3"/><line x1="157.5" y1="397" x2="157.5" y2="418" stroke="#707070" stroke-dasharray="3 3"/><line x1="157.5" y1="418" x2="157.5" y2="472" stroke="#58705a" stroke-dasharray="3 3" stroke-dashoffset="3"/><line x1="157.5" y1="472" x2="157.5" y2="524" stroke="#707070" stroke-dasharray="3 3" stroke-dashoffset="3"/><line x1="227.5" y1="397" x2="227.5" y2="418" stroke="#707070" stroke-dasharray="3 3"/><line x1="227.5" y1="418" x2="227.5" y2="472" stroke="#58705a" stroke-dasharray="3 3" stroke-dashoffset="3"/><line x1="227.5" y1="472" x2="227.5" y2="524" stroke="#707070" stroke-dasharray="3 3" stroke-dashoffset="3"/><line x1="298.5" y1="397" x2="298.5" y2="418" stroke="#707070" stroke-dasharray="3 3"/><line x1="298.5" y1="418" x2="298.5" y2="472" stroke="#58705a" stroke-dasharray="3 3" stroke-dashoffset="3"/><line x1="298.5" y1="472" x2="298.5" y2="524" stroke="#707070" stroke-dasharray="3 3" stroke-dashoffset="3"/><line x1="368.5" y1="397" x2="368.5" y2="418" stroke="#707070" stroke-dasharray="3 3"/><line x1="368.5" y1="418" x2="368.5" y2="472" stroke="#58705a" stroke-dasharray="3 3" stroke-dashoffset="3"/><line x1="368.5" y1="472" x2="368.5" y2="524" stroke="#707070" stroke-dasharray="3 3" stroke-dashoffset="3"/><line x1="438.5" y1="397" x2="438.5" y2="418" stroke="#707070" stroke-dasharray="3 3"/><line x1="438.5" y1="418" x2="438.5" y2="472" stroke="#58705a" stroke-dasharray="3 3" stroke-dashoffset="3"/><line x1="438.5" y1="472" x2="438.5" y2="524" stroke="#707070" stroke-dasharray="3 3" stroke-dashoffset="3"/><line x1="508.5" y1="397" x2="508.5" y2="418" stroke="#707070" stroke-dasharray="3 3"/><line x1="508.5" y1="418" x2="508.5" y2="472" stroke="#58705a" stroke-dasharray="3 3" stroke-dashoffset="3"/><line x1="508.5" y1="472" x2="508.5" y2="524" stroke="#707070" stroke-dasharray="3 3" stroke-dashoffset="3"/><line x1="579.5" y1="397" x2="579.5" y2="418" stroke="#707070" stroke-dasharray="3 3"/><line x1="579.5" y1="418" x2="579.5" y2="472" stroke="#58705a" stroke-dasharray="3 3" stroke-dashoffset="3"/><line x1="579.5" y1="472" x2="579.5" y2="524" stroke="#707070" stroke-dasharray="3 3" stroke-dashoffset="3"/><line x1="649.5" y1="397" x2="649.5" y2="418" stroke="#707070" stroke-dasharray="3 3"/><line x1="649.5" y1="418" x2="649.5" y2="472" stroke="#58705a" stroke-dasharray="3 3" stroke-dashoffset="3"/><line x1="649.5" y1="472" x2="649.5" y2="524" stroke="#707070" stroke-dasharray="3 3" stroke-dashoffset="3"/><line x1="719.5" y1="397" x2="719.5" y2="418" stroke="#707070" stroke-dasharray="3 3"/><line x1="719.5" y1="418" x2="719.5" y2="472" stroke="#58705a" stroke-dasharray="3 3" stroke-dashoffset="3"/><line x1="719.5" y1="472" x2="719.5" y2="524" stroke="#707070" stroke-dasharray="3 3" stroke-dashoffset="3"/><line x1="790.5" y1="397" x2="790.5" y2="418" stroke="#707070" stroke-dasharray="3 3"/><line x1="790.5" y1="418" x2="790.5" y2="472" stroke="#58705a" stroke-dasharray="3 3" stroke-dashoffset="3"/><line x1="790.5" y1="472" x2="790.5" y2="524" stroke="#707070" stroke-dasharray="3 3" stroke-dashoffset="3"/><line x1="860.5" y1="397" x2="860.5" y2="418" stroke="#707070" stroke-dasharray="3 3"/><line x1="860.5" y1="418" x2="860.5" y2="472" stroke="#58705a" stroke-dasharray="3 3" stroke-dashoffset="3"/><line x1="860.5" y1="472" x2="860.5" y2="524" stroke="#707070" stroke-dasharray="3 3" stroke-dashoffset="3"/><line x1="81" y1="418.5" x2="923" y2="418.5" stroke="#58705a" stroke-dasharray="3 3"/><line x1="81" y1="439.5" x2="923" y2="439.5" stroke="#58705a" stroke-dasharray="3 3"/><line x1="81" y1="460.5" x2="923" y2="460.5" stroke="#58705a" stroke-dasharray="3 3"/><line x1="81" y1="482.5" x2="923" y2="482.5" stroke="#707070" stroke-dasharray="3 3"/><line x1="81" y1="504.5" x2="923" y2="504.5" stroke="#707070" stroke-dasharray="3 3"/><polyline points="81.5,441.5 82.5,441.5 83.5,442.5 84.5,441.5 85.5,441.5 86.5,442.5 87.5,441.5 88.5,440.5 89.5,441.5 90.5,439.5 91.5,441.5 92.5,441.5 93.5,439.5 94.5,440.5 95.5,441.5 96.5,441.5 97.5,441.5 98.5,442.5 99.5,442.5 100.5,442.5 101.5,441.5 102.5,442.5 103.5,441.5 104.5,441.5 105.5,441.5 106.5,440.5 107.5,440.5 108.5,442.5 109.5,442.5 110.5,442.5 111.5,442.5 112.5,439.5 113.5,442.5 114.5,442.5 115.5,442.5 116.5,442.5 117.5,442.5 118.5,442.5 119.5,442.5 120.5,442.5 121.5,442.5 122.5,442.5 123.5,442.5 124.5,442.5 125.5,442.5 126.5,442.5 127.5,442.5 128.5,440.5 129.5,440.5 130.5,440.5 131.5,440.5 132.5,441.5 133.5,441.5 134.5,442.5 135.5,441.5 136.5,440.5 137.5,441.5 138.5,440.5 139.5,442.5 140.5,442.5 141.5,442.5 142.5,442.5 143.5,442.5 144.5,442.5 145.5,440.5 146.5,440.5 147.5,439.5 148.5,441.5 149.5,441.5 150.5,441.5 151.5,441.5 152.5,441.5 153.5,441.5 154.5,441.5 155.5,441.5 156.5,441.5 157.5,441.5 158.5,441.5 159.5,440.5 160.5,440.5 161.5,440.5 162.5,440.5 163.5,441.5 164.5,442.5 165.5,441.5 166.5,441.5 167.5,441.5 168.5,441.5 169.5,441.5 170.5,440.5 171.5,440.5 172.5,441.5 173.5,441.5 174.5,440.5 175.5,440.5 176.5,440.5 177.5,440.5 178.5,441.5 179.5,441.5 180.5,441.5 181.5,441.5 182.5,441.5 183.5,441.5 184.5,442.5 185.5,442.5 186.5,442.5 187.5,442.5 188.5,442.5 189.5,441.5 190.5,440.5 191.5,440.5 192.5,440.5 193.5,441.5 194.5,441.5 195.5,441.5 196.5,441.5 197.5,441.5 198.5,441.5 199.5,441.5 200.5,442.5 201.5,441.5 202.5,441.5 203.5,442.5 204.5,442.5 205.5,439.5 206.5,439.5 207.5,439.5 208.5,441.5 209.5,441.5 210.5,442.5 211.5,442.5 212.5,442.5 213.5,442.5 214.5,442.5 215.5,442.5 216.5,442.5 217.5,442.5 218.5,442.5 219.5,442.5 220.5,442.5 221.5,440.5 222.5,440.5 223.5,440.5 224.5,442.5 225.5,442.5 226.5,442.5 227.5,441.5 228.5,439.5 229.5,439.5 230.5,440.5 231.5,440.5 232.5,439.5 233.5,441.5 234.5,441.5 235.5,441.5 236.5,441.5 237.5,441.5 238.5,441.5 239.5,440.5 240.5,440.5 241.5,441.5 242.5,441.5 243.5,441.5 244.5,442.5 245.5,439.5 246.5,442.5 247.5,442.5 248.5,442.5 249.5,439.5 250.5,439.5 251.5,439.5 252.5,439.5 253.5,442.5 254.5,441.5 255.5,441.5 256.5,442.5 257.5,442.5 258.5,442.5 259.5,442.5 260.5,442.5 261.5,442.5 262.5,442.5 263.5,441.5 264.5,441.5 265.5,441.5 266.5,441.5 267.5,441.5 268.5,441.5 269.5,442.5 270.5,442.5 271.5,442.5 272.5,442.5 273.5,442.5 274.5,442.5 275.5,442.5 276.5,442.5 277.5,442.5 278.5,442.5 279.5,442.5 280.5,442.5 281.5,442.5 282.5,442.5 283.5,441.5 284.5,441.5 285.5,441.5 286.5,441.5 287.5,441.5 288.5,441.5 289.5,440.5 290.5,440.5 291.5,440.5 292.5,440.5 293.5,439.5 294.5,442.5 295.5,442.5 296.5,442.5 297.5,442.5 298.5,442.5 299.5,441.5 300.5,439.5 301.5,441.5 302.5,441.5 303.5,442.5 304.5,442.5 305.5,439.5 306.5,439.5 307.5,439.5 308.5,441.5 309.5,440.5 310.5,441.5 311.5,439.5 312.5,439.5 313.5,441.5 314.5,441.5 315.5,441.5 316.5,441.5 317.5,441.5 318.5,441.5 319.5,441.5 320.5,441.5 321.5,441.5 322.5,441.5 323.5,440.5 324.5,440.5 325.5,440.5 326.5,442.5 327.5,442.5 328.5,441.5 329.5,441.5 330.5,441.5 331.5,441.5 332.5,441.5 333.5,440.5 334.5,442.5 335.5,441.5 336.5,441.5 337.5,440.5 338.5,440.5 339.5,442.5 340.5,442.5 341.5,440.5 342.5,442.5 343.5,442.5 344.5,442.5 345.5,442.5 346.5,442.5 347.5,440.5 348.5,440.5 349.5,440.5 350.5,441.5 351.5,441.5 352.5,440.5 353.5,441.5 354.5,440.5 355.5,440.5 356.5,440.5 357.5,441.5 358.5,442.5 359.5,442.5 360.5,439.5 361.5,439.5 362.5,439.5 363.5,439.5 364.5,441.5 365.5,441.5 366.5,441.5 367.5,441.5 368.5,442.5 369.5,441.5 370.5,441.5 371.5,441.5 372.5,441.5 373.5,441.5 374.5,441.5 375.5,441.5 376.5,441.5 377.5,441.5 378.5,441.5 379.5,441.5 380.5,441.5 381.5,440.5 382.5,440.5 383.5,440.5 384.5,440.5 385.5,440.5 386.5,440.5 387.5,440.5 388.5,442.5 389.5,442.5 390.5,442.5 391.5,442.5 392.5,442.5 393.5,442.5 394.5,442.5 395.5,442.5 396.5,442.5 397.5,441.5 398.5,441.5 399.5,440.5 400.5,440.5 401.5,440.5 402.5,440.5 403.5,440.5 404.5,440.5 405.5,440.5 406.5,440.5 407.5,440.5 408.5,440.5 409.5,440.5 410.5,440.5 411.5,441.5 412.5,440.5 413.5,440.5 414.5,440.5 415.5,440.5 416.5,442.5 417.5,442.5 418.5,442.5 419.5,442.5 420.5,439.5 421.5,441.5 422.5,440.5 423.5,442.5 424.5,441.5 425.5,442.5 426.5,442.5 427.5,442.5 428.5,442.5 429.5,442.5 430.5,442.5 431.5,440.5 432.5,439.5 433.5,439.5 434.5,442.5 435.5,442.5 436.5,442.5 437.5,441.5 438.5,439.5 439.5,442.5 440.5,442.5 441.5,442.5 442.5,440.5 443.5,440.5 444.5,440.5 445.5,440.5 446.5,440.5 447.5,440.5 448.5,441.5 449.5,441.5 450.5,441.5 451.5,441.5 452.5,441.5 453.5,441.5 454.5,440.5 455.5,440.5 456.5,439.5 457.5,439.5 458.5,439.5 459.5,441.5 460.5,439.5 461.5,439.5 462.5,442.5 463.5,441.5 464.5,440.5 465.5,439.5 466.5,441.5 467.5,441.5 468.5,441.5 469.5,441.5 470.5,441.5 471.5,441.5 472.5,441.5 473.5,441.5 474.5,441.5 475.5,441.5 476.5,441.5 477.5,440.5 478.5,440.5 479.5,440.5 480.5,440.5 481.5,441.5 482.5,441.5 483.5,442.5 484.5,441.5 485.5,441.5 486.5,441.5 487.5,442.5 488.5,442.5 489.5,441.5 490.5,441.5 491.5,441.5 492.5,441.5 493.5,439.5 494.5,439.5 495.5,441.5 496.5,441.5 497.5,438.5 498.5,440.5 499.5,441.5 500.5,441.5 501.5,441.5 502.5,442.5 503.5,442.5 504.5,441.5 505.5,441.5 506.5,441.5 507.5,442.5 508.5,442.5 509.5,442.5 510.5,441.5 511.5,441.5 512.5,439.5 513.5,439.5 514.5,439.5 515.5,441.5 516.5,441.5 517.5,441.5 518.5,441.5 519.5,441.5 520.5,441.5 521.5,441.5 522.5,441.5 523.5,441.5 524.5,441.5 525.5,441.5 526.5,442.5 527.5,442.5 528.5,442.5 529.5,442.5 530.5,442.5 531.5,442.5 532.5,442.5 533.5,442.5 534.5,440.5 535.5,439.5 536.5,439.5 537.5,441.5 538.5,442.5 539.5,442.5 540.5,441.5 541.5,441.5 542.5,441.5 543.5,441.5 544.5,441.5 545.5,441.5 546.5,441.5 547.5,441.5 548.5,441.5 549.5,441.5 550.5,441.5 551.5,441.5 552.5,441.5 553.5,441.5 554.5,441.5 555.5,441.5 556.5,441.5 557.5,441.5 558.5,441.5 559.5,441.5 560.5,441.5 561.5,433.5 562.5,439.5 563.5,440.5 564.5,440.5 565.5,440.5 566.5,439.5 567.5,440.5 568.5,441.5 569.5,441.5 570.5,439.5 571.5,439.5 572.5,441.5 573.5,442.5 574.5,442.5 575.5,441.5 576.5,439.5 577.5,441.5 578.5,441.5 579.5,441.5 580.5,441.5 581.5,441.5 582.5,441.5 583.5,441.5 584.5,441.5 585.5,441.5 586.5,441.5 587.5,442.5 588.5,441.5 589.5,441.5 590.5,441.5 591.5,439.5 592.5,439.5 593.5,441.5 594.5,441.5 595.5,441.5 596.5,441.5 597.5,441.5 598.5,439.5 599.5,441.5 600.5,441.5 601.5,442.5 602.5,438.5 603.5,440.5 604.5,441.5 605.5,439.5 606.5,440.5 607.5,440.5 608.5,441.5 609.5,434.5 610.5,439.5 611.5,440.5 612.5,441.5 613.5,440.5 614.5,440.5 615.5,440.5 616.5,440.5 617.5,441.5 618.5,441.5 619.5,441.5 620.5,441.5 621.5,441.5 622.5,442.5 623.5,442.5 624.5,440.5 625.5,440.5 626.5,440.5 627.5,440.5 628.5,440.5 629.5,441.5 630.5,440.5 631.5,441.5 632.5,441.5 633.5,441.5 634.5,442.5 635.5,439.5 636.5,439.5 637.5,439.5 638.5,441.5 639.5,442.5 640.5,442.5 641.5,441.5 642.5,442.5 643.5,442.5 644.5,437.5 645.5,440.5 646.5,442.5 647.5,440.5 648.5,442.5 649.5,440.5 650.5,441.5 651.5,441.5 652.5,441.5 653.5,441.5 654.5,441.5 655.5,441.5 656.5,441.5 657.5,440.5 658.5,440.5 659.5,440.5 660.5,429.5 661.5,437.5 662.5,442.5 663.5,442.5 664.5,441.5 665.5,441.5 666.5,441.5 667.5,441.5 668.5,441.5 669.5,440.5 670.5,441.5 671.5,441.5 672.5,441.5 673.5,442.5 674.5,442.5 675.5,441.5 676.5,441.5 677.5,442.5 678.5,442.5 679.5,441.5 680.5,442.5 681.5,441.5 682.5,440.5 683.5,440.5 684.5,441.5 685.5,442.5 686.5,442.5 687.5,441.5 688.5,441.5 689.5,441.5 690.5,439.5 691.5,442.5 692.5,442.5 693.5,442.5 694.5,442.5 695.5,441.5 696.5,441.5 697.5,441.5 698.5,441.5 699.5,440.5 700.5,440.5 701.5,440.5 702.5,441.5 703.5,441.5 704.5,441.5 705.5,441.5 706.5,442.5 707.5,442.5 708.5,441.5 709.5,441.5 710.5,441.5 711.5,442.5 712.5,442.5 713.5,442.5 714.5,441.5 715.5,441.5 716.5,441.5 717.5,441.5 718.5,439.5 719.5,439.5 720.5,439.5 721.5,439.5 722.5,440.5 723.5,442.5 724.5,442.5 725.5,442.5 726.5,441.5 727.5,442.5 728.5,441.5 729.5,440.5 730.5,440.5 731.5,442.5 732.5,442.5 733.5,437.5 734.5,440.5 735.5,442.5 736.5,442.5 737.5,442.5 738.5,442.5 739.5,442.5 740.5,442.5 741.5,442.5 742.5,442.5 743.5,440.5 744.5,440.5 745.5,440.5 746.5,442.5 747.5,441.5 748.5,441.5 749.5,442.5 750.5,442.5 751.5,440.5 752.5,440.5 753.5,440.5 754.5,442.5 755.5,439.5 756.5,440.5 757.5,440.5 758.5,440.5 759.5,440.5 760.5,439.5 761.5,439.5 762.5,439.5 763.5,439.5 764.5,440.5 765.5,440.5 766.5,441.5 767.5,441.5 768.5,440.5 769.5,440.5 770.5,442.5 771.5,442.5 772.5,441.5 773.5,441.5 774.5,441.5 775.5,441.5 776.5,441.5 777.5,441.5 778.5,441.5 779.5,440.5 780.5,442.5 781.5,442.5 782.5,440.5 783.5,440.5 784.5,440.5 785.5,440.5 786.5,439.5 787.5,439.5 788.5,437.5 789.5,440.5 790.5,439.5 791.5,440.5 792.5,441.5 793.5,441.5 794.5,440.5 795.5,442.5 796.5,442.5 797.5,442.5 798.5,442.5 799.5,441.5 800.5,441.5 801.5,441.5 802.5,442.5 803.5,442.5 804.5,441.5 805.5,441.5 806.5,441.5 807.5,441.5 808.5,441.5 809.5,441.5 810.5,441.5 811.5,442.5 812.5,442.5 813.5,439.5 814.5,441.5 815.5,442.5 816.5,442.5 817.5,442.5 818.5,441.5 819.5,442.5 820.5,442.5 821.5,442.5 822.5,439.5 823.5,439.5 824.5,439.5 825.5,442.5 826.5,441.5 827.5,440.5 828.5,442.5 829.5,442.5 830.5,441.5 831.5,441.5 832.5,441.5 833.5,441.5 834.5,441.5 835.5,441.5 836.5,441.5 837.5,441.5 838.5,441.5 839.5,441.5 840.5,440.5 841.5,440.5 842.5,440.5 843.5,440.5 844.5,440.5 845.5,441.5 846.5,441.5 847.5,440.5 848.5,440.5 849.5,440.5 850.5,439.5 851.5,441.5 852.5,440.5 853.5,440.5 854.5,442.5 855.5,442.5 856.5,440.5 857.5,441.5 858.5,440.5 859.5,440.5 860.5,440.5 861.5,440.5 862.5,441.5 863.5,441.5 864.5,441.5 865.5,441.5 866.5,441.5 867.5,441.5 868.5,441.5 869.5,441.5 870.5,441.5 871.5,441.5 872.5,440.5 873.5,440.5 874.5,441.5 875.5,441.5 876.5,439.5 877.5,441.5 878.5,439.5 879.5,441.5 880.5,441.5 881.5,441.5 882.5,441.5 883.5,441.5 884.5,441.5 885.5,442.5 886.5,440.5 887.5,440.5 888.5,440.5 889.5,440.5 890.5,440.5 891.5,440.5 892.5,441.5 893.5,441.5 894.5,441.5 895.5,441.5 896.5,441.5 897.5,441.5 898.5,441.5 899.5,441.5 900.5,440.5 901.5,441.5 902.5,441.5 903.5,441.5 904.5,441.5 905.5,441.5 906.5,441.5 907.5,441.5 908.5,441.5 909.5,441.5 910.5,442.5 911.5,440.5 912.5,440.5 913.5,440.5 914.5,440.5 915.5,440.5 916.5,441.5 917.5,440.5 918.5,440.5 919.5,442.5 920.5,442.5 921.5,442.5 922.5,442.5 923.5,440.5" fill="none" stroke="#ff0000" stroke-width="1"/><rect x="79" y="396" width="2" height="130" fill="#000"/><rect x="79" y="524" width="844" height="2" fill="#000"/><line x1="76" y1="396.5" x2="79" y2="396.5" stroke="#808080"/><line x1="76" y1="418.5" x2="79" y2="418.5" stroke="#808080"/><line x1="76" y1="439.5" x2="79" y2="439.5" stroke="#808080"/><line x1="76" y1="460.5" x2="79" y2="460.5" stroke="#808080"/><line x1="76" y1="482.5" x2="79" y2="482.5" stroke="#808080"/><line x1="76" y1="504.5" x2="79" y2="504.5" stroke="#808080"/><line x1="76" y1="524.5" x2="79" y2="524.5" stroke="#808080"/><line x1="77" y1="402.5" x2="79" y2="402.5" stroke="#909090"/><line x1="77" y1="407.5" x2="79" y2="407.5" stroke="#909090"/><line x1="77" y1="413.5" x2="79" y2="413.5" stroke="#909090"/><line x1="77" y1="423.5" x2="79" y2="423.5" stroke="#909090"/><line x1="77" y1="429.5" x2="79" y2="429.5" stroke="#909090"/><line x1="77" y1="434.5" x2="79" y2="434.5" stroke="#909090"/><line x1="77" y1="445.5" x2="79" y2="445.5" stroke="#909090"/><line x1="77" y1="450.5" x2="79" y2="450.5" stroke="#909090"/><line x1="77" y1="455.5" x2="79" y2="455.5" stroke="#909090"/><line x1="77" y1="466.5" x2="79" y2="466.5" stroke="#909090"/><line x1="77" y1="471.5" x2="79" y2="471.5" stroke="#909090"/><line x1="77" y1="477.5" x2="79" y2="477.5" stroke="#909090"/><line x1="77" y1="487.5" x2="79" y2="487.5" stroke="#909090"/><line x1="77" y1="493.5" x2="79" y2="493.5" stroke="#909090"/><line x1="77" y1="498.5" x2="79" y2="498.5" stroke="#909090"/><line x1="77" y1="509.5" x2="79" y2="509.5" stroke="#909090"/><line x1="77" y1="514.5" x2="79" y2="514.5" stroke="#909090"/><line x1="77" y1="519.5" x2="79" y2="519.5" stroke="#909090"/><line x1="87.5" y1="526" x2="87.5" y2="530" stroke="#808080"/><line x1="104.5" y1="526" x2="104.5" y2="528" stroke="#808080"/><line x1="122.5" y1="526" x2="122.5" y2="528" stroke="#808080"/><line x1="139.5" y1="526" x2="139.5" y2="528" stroke="#808080"/><line x1="157.5" y1="526" x2="157.5" y2="530" stroke="#808080"/><line x1="175.5" y1="526" x2="175.5" y2="528" stroke="#808080"/><line x1="192.5" y1="526" x2="192.5" y2="528" stroke="#808080"/><line x1="210.5" y1="526" x2="210.5" y2="528" stroke="#808080"/><line x1="227.5" y1="526" x2="227.5" y2="530" stroke="#808080"/><line x1="245.5" y1="526" x2="245.5" y2="528" stroke="#808080"/><line x1="262.5" y1="526" x2="262.5" y2="528" stroke="#808080"/><line x1="280.5" y1="526" x2="280.5" y2="528" stroke="#808080"/><line x1="298.5" y1="526" x2="298.5" y2="530" stroke="#808080"/><line x1="315.5" y1="526" x2="315.5" y2="528" stroke="#808080"/><line x1="333.5" y1="526" x2="333.5" y2="528" stroke="#808080"/><line x1="350.5" y1="526" x2="350.5" y2="528" stroke="#808080"/><line x1="368.5" y1="526" x2="368.5" y2="530" stroke="#808080"/><line x1="385.5" y1="526" x2="385.5" y2="528" stroke="#808080"/><line x1="403.5" y1="526" x2="403.5" y2="528" stroke="#808080"/><line x1="421.5" y1="526" x2="421.5" y2="528" stroke="#808080"/><line x1="438.5" y1="526" x2="438.5" y2="530" stroke="#808080"/><line x1="456.5" y1="526" x2="456.5" y2="528" stroke="#808080"/><line x1="473.5" y1="526" x2="473.5" y2="528" stroke="#808080"/><line x1="491.5" y1="526" x2="491.5" y2="528" stroke="#808080"/><line x1="508.5" y1="526" x2="508.5" y2="530" stroke="#808080"/><line x1="526.5" y1="526" x2="526.5" y2="528" stroke="#808080"/><line x1="544.5" y1="526" x2="544.5" y2="528" stroke="#808080"/><line x1="561.5" y1="526" x2="561.5" y2="528" stroke="#808080"/><line x1="579.5" y1="526" x2="579.5" y2="530" stroke="#808080"/><line x1="596.5" y1="526" x2="596.5" y2="528" stroke="#808080"/><line x1="614.5" y1="526" x2="614.5" y2="528" stroke="#808080"/><line x1="632.5" y1="526" x2="632.5" y2="528" stroke="#808080"/><line x1="649.5" y1="526" x2="649.5" y2="530" stroke="#808080"/><line x1="667.5" y1="526" x2="667.5" y2="528" stroke="#808080"/><line x1="684.5" y1="526" x2="684.5" y2="528" stroke="#808080"/><line x1="702.5" y1="526" x2="702.5" y2="528" stroke="#808080"/><line x1="719.5" y1="526" x2="719.5" y2="530" stroke="#808080"/><line x1="737.5" y1="526" x2="737.5" y2="528" stroke="#808080"/><line x1="755.5" y1="526" x2="755.5" y2="528" stroke="#808080"/><line x1="772.5" y1="526" x2="772.5" y2="528" stroke="#808080"/><line x1="790.5" y1="526" x2="790.5" y2="530" stroke="#808080"/><line x1="807.5" y1="526" x2="807.5" y2="528" stroke="#808080"/><line x1="825.5" y1="526" x2="825.5" y2="528" stroke="#808080"/><line x1="842.5" y1="526" x2="842.5" y2="528" stroke="#808080"/><line x1="860.5" y1="526" x2="860.5" y2="530" stroke="#808080"/><line x1="878.5" y1="526" x2="878.5" y2="528" stroke="#808080"/><line x1="895.5" y1="526" x2="895.5" y2="528" stroke="#808080"/><line x1="913.5" y1="526" x2="913.5" y2="528" stroke="#808080"/></svg>
<div class="t" style="left:30px;width:42.5px;text-align:right;top:390.5px">12</div>
<div class="t" style="left:30px;width:42.5px;text-align:right;top:412.5px">10</div>
<div class="t" style="left:30px;width:42.5px;text-align:right;top:433.5px">8</div>
<div class="t" style="left:30px;width:42.5px;text-align:right;top:454.5px">6</div>
<div class="t" style="left:30px;width:42.5px;text-align:right;top:476.5px">4</div>
<div class="t" style="left:30px;width:42.5px;text-align:right;top:498.5px">2</div>
<div class="t" style="left:30px;width:43px;text-align:right;top:520px">KHz</div>
<div class="t" style="left:57.2px;width:60px;text-align:center;top:534px">11:24:15</div>
<div class="t" style="left:127.5px;width:60px;text-align:center;top:534px">11:24:20</div>
<div class="t" style="left:197.8px;width:60px;text-align:center;top:534px">11:24:25</div>
<div class="t" style="left:268.1px;width:60px;text-align:center;top:534px">11:24:30</div>
<div class="t" style="left:338.4px;width:60px;text-align:center;top:534px">11:24:35</div>
<div class="t" style="left:408.7px;width:60px;text-align:center;top:534px">11:24:40</div>
<div class="t" style="left:479.0px;width:60px;text-align:center;top:534px">11:24:45</div>
<div class="t" style="left:549.3px;width:60px;text-align:center;top:534px">11:24:50</div>
<div class="t" style="left:619.6px;width:60px;text-align:center;top:534px">11:24:55</div>
<div class="t" style="left:689.9px;width:60px;text-align:center;top:534px">11:25:00</div>
<div class="t" style="left:760.2px;width:60px;text-align:center;top:534px">11:25:05</div>
<div class="t" style="left:830.5px;width:60px;text-align:center;top:534px">11:25:10</div>
<div class="ab" style="left:832px;top:399px;width:66px;height:32px;border:1px solid #a0a0a0;background:#fff"></div>
<svg class="ab" style="left:837px;top:404px" width="54" height="21">
<path d="M0 0 H50 Q54 0 54 4 V8 Q54 10.3 52.5 10.5 Q54 10.7 54 13 V17 Q54 21 50 21 H0 Z M3.5 3.8 H26.5 V17 H3.5 Z M30.5 3.8 H49 Q51 3.8 51 6 Q51 8.1 49 8.1 H30.5 Z M30.5 12.4 H49 Q51 12.4 51 14.7 Q51 17 49 17 H30.5 Z" fill="#3311ee" fill-rule="evenodd" stroke="#2a08b0" stroke-width="0.6"/>
<path d="M6 7.2 H22 Q24.2 7.2 24.2 10.6 Q24.2 14 22 14 H6 Z" fill="#3311ee" stroke="#2a08b0" stroke-width="0.6"/>
</svg>
<div class="ab" style="left:46px;top:546px;width:878px;height:2px;background:#f1efe9"></div>
<div class="ab" style="left:44px;top:548px;width:883px;height:2px;background:#fcfcfe"></div>
<div class="ab" style="left:44px;top:550px;width:884px;height:1px;background:#919b9c"></div>
<div class="ab" style="left:50px;top:565px;width:433px;height:53px;border:1px solid #d0d0bf;border-radius:4px"></div>
<div class="t" style="left:56px;top:558px;padding:0 2px;background:#ECE9D8;color:#0046d5;font-weight:bold;font-size:12px">RADIO</div>
<div class="ab" style="left:57px;top:573px;width:330px;height:37px;background:#1a381c"></div>
<svg class="ab" style="left:61px;top:579px" width="33" height="26"><defs><linearGradient id="bg61" x1="0" y1="0" x2="0" y2="1"><stop offset="0" stop-color="#f0f0f0"/><stop offset="0.12" stop-color="#d8d8d8"/><stop offset="0.5" stop-color="#b0b0b0"/><stop offset="0.9" stop-color="#8a8a8a"/><stop offset="1" stop-color="#a0a0a0"/></linearGradient></defs><path d="M5 0.7 H27.5 L32.3 5 V21 L27.5 25.3 H5 L0.7 21 V5 Z" fill="url(#bg61)" stroke="#000" stroke-width="1.4" stroke-linejoin="round"/><path d="M5 12.6 L15.5 5.2 V20 Z" fill="#dcdcdc"/><path d="M5 12.6 L15.5 20 V5.2" fill="none" stroke="#2a2a2a" stroke-width="0.9"/><path d="M19 12.6 L29 5.2 V20 Z" fill="#dcdcdc"/><path d="M19 12.6 L29 20 V5.2" fill="none" stroke="#2a2a2a" stroke-width="0.9"/></svg>
<svg class="ab" style="left:97px;top:579px" width="33" height="26"><defs><linearGradient id="bg97" x1="0" y1="0" x2="0" y2="1"><stop offset="0" stop-color="#f0f0f0"/><stop offset="0.12" stop-color="#d8d8d8"/><stop offset="0.5" stop-color="#b0b0b0"/><stop offset="0.9" stop-color="#8a8a8a"/><stop offset="1" stop-color="#a0a0a0"/></linearGradient></defs><path d="M5 0.7 H27.5 L32.3 5 V21 L27.5 25.3 H5 L0.7 21 V5 Z" fill="url(#bg97)" stroke="#000" stroke-width="1.4" stroke-linejoin="round"/><path d="M4.4 12.6 L24.8 5.2 V20 Z" fill="#dcdcdc"/><path d="M4.4 12.6 L24.8 20 V5.2" fill="none" stroke="#2a2a2a" stroke-width="0.9"/></svg>
<svg class="ab" style="left:205px;top:579px" width="33" height="26"><defs><linearGradient id="bg205" x1="0" y1="0" x2="0" y2="1"><stop offset="0" stop-color="#f0f0f0"/><stop offset="0.12" stop-color="#d8d8d8"/><stop offset="0.5" stop-color="#b0b0b0"/><stop offset="0.9" stop-color="#8a8a8a"/><stop offset="1" stop-color="#a0a0a0"/></linearGradient></defs><path d="M5 0.7 H27.5 L32.3 5 V21 L27.5 25.3 H5 L0.7 21 V5 Z" fill="url(#bg205)" stroke="#000" stroke-width="1.4" stroke-linejoin="round"/><path d="M7.5 5.2 L27.5 12.6 L7.5 20 Z" fill="#dcdcdc"/><path d="M7.5 20 L27.5 12.6" fill="none" stroke="#2a2a2a" stroke-width="0.9"/><path d="M7.5 5.2 V20" fill="none" stroke="#a0a0a0" stroke-width="0.6"/></svg>
<svg class="ab" style="left:242px;top:579px" width="33" height="26"><defs><linearGradient id="bg242" x1="0" y1="0" x2="0" y2="1"><stop offset="0" stop-color="#f0f0f0"/><stop offset="0.12" stop-color="#d8d8d8"/><stop offset="0.5" stop-color="#b0b0b0"/><stop offset="0.9" stop-color="#8a8a8a"/><stop offset="1" stop-color="#a0a0a0"/></linearGradient></defs><path d="M5 0.7 H27.5 L32.3 5 V21 L27.5 25.3 H5 L0.7 21 V5 Z" fill="url(#bg242)" stroke="#000" stroke-width="1.4" stroke-linejoin="round"/><path d="M5 5.2 L15.5 12.6 L5 20 Z" fill="#dcdcdc"/><path d="M5 20 L15.5 12.6" fill="none" stroke="#2a2a2a" stroke-width="0.9"/><path d="M5 5.2 V20" fill="none" stroke="#a0a0a0" stroke-width="0.6"/><path d="M18.5 5.2 L29 12.6 L18.5 20 Z" fill="#dcdcdc"/><path d="M18.5 20 L29 12.6" fill="none" stroke="#2a2a2a" stroke-width="0.9"/><path d="M18.5 5.2 V20" fill="none" stroke="#a0a0a0" stroke-width="0.6"/></svg>
<svg class="ab" style="left:134px;top:581.5px" width="70" height="22"><g transform="translate(2.5,0) skewX(-5)"><path d="M0.8 0 H12.2 L9.2 3 H3.8 Z" fill="#0b7a16"/><path d="M12.5 0.6 V9.2 L10.8 10.2 L9.4 9.2 V3.6 Z" fill="#0b7a16"/><path d="M12.5 10.8 V19.4 L9.4 16.4 V10.8 L10.8 9.8 Z" fill="#0b7a16"/><path d="M0.8 20 L3.8 17 H9.2 L12.2 20 Z" fill="#0b7a16"/><path d="M-0.5 10.8 L1.2 9.8 L3.1 10.8 V16.4 L-0.5 19.4 Z" fill="#0b7a16"/><path d="M-0.5 0.6 L3.1 3.6 V9.2 L1.2 10.2 L-0.5 9.2 Z" fill="#0b7a16"/><path d="M1.2 10 L3.1 8.5 H9.4 L10.8 10 L9.4 11.5 H3.1 Z" fill="#0b7a16"/></g><g transform="translate(17.5,0) skewX(-5)"><path d="M0.8 0 H12.2 L9.2 3 H3.8 Z" fill="#14ff2c"/><path d="M12.5 0.6 V9.2 L10.8 10.2 L9.4 9.2 V3.6 Z" fill="#14ff2c"/><path d="M12.5 10.8 V19.4 L9.4 16.4 V10.8 L10.8 9.8 Z" fill="#14ff2c"/><path d="M0.8 20 L3.8 17 H9.2 L12.2 20 Z" fill="#14ff2c"/><path d="M-0.5 10.8 L1.2 9.8 L3.1 10.8 V16.4 L-0.5 19.4 Z" fill="#0b7a16"/><path d="M-0.5 0.6 L3.1 3.6 V9.2 L1.2 10.2 L-0.5 9.2 Z" fill="#14ff2c"/><path d="M1.2 10 L3.1 8.5 H9.4 L10.8 10 L9.4 11.5 H3.1 Z" fill="#14ff2c"/></g><g transform="translate(32.5,0) skewX(-5)"><path d="M0.8 0 H12.2 L9.2 3 H3.8 Z" fill="#14ff2c"/><path d="M12.5 0.6 V9.2 L10.8 10.2 L9.4 9.2 V3.6 Z" fill="#14ff2c"/><path d="M12.5 10.8 V19.4 L9.4 16.4 V10.8 L10.8 9.8 Z" fill="#14ff2c"/><path d="M0.8 20 L3.8 17 H9.2 L12.2 20 Z" fill="#14ff2c"/><path d="M-0.5 10.8 L1.2 9.8 L3.1 10.8 V16.4 L-0.5 19.4 Z" fill="#0b7a16"/><path d="M-0.5 0.6 L3.1 3.6 V9.2 L1.2 10.2 L-0.5 9.2 Z" fill="#14ff2c"/><path d="M1.2 10 L3.1 8.5 H9.4 L10.8 10 L9.4 11.5 H3.1 Z" fill="#14ff2c"/></g><g transform="translate(52,0) skewX(-5)"><path d="M0.8 0 H12.2 L9.2 3 H3.8 Z" fill="#14ff2c"/><path d="M12.5 0.6 V9.2 L10.8 10.2 L9.4 9.2 V3.6 Z" fill="#14ff2c"/><path d="M12.5 10.8 V19.4 L9.4 16.4 V10.8 L10.8 9.8 Z" fill="#14ff2c"/><path d="M0.8 20 L3.8 17 H9.2 L12.2 20 Z" fill="#14ff2c"/><path d="M-0.5 10.8 L1.2 9.8 L3.1 10.8 V16.4 L-0.5 19.4 Z" fill="#0b7a16"/><path d="M-0.5 0.6 L3.1 3.6 V9.2 L1.2 10.2 L-0.5 9.2 Z" fill="#14ff2c"/><path d="M1.2 10 L3.1 8.5 H9.4 L10.8 10 L9.4 11.5 H3.1 Z" fill="#14ff2c"/></g><rect x="45.5" y="17" width="3" height="3" fill="#14ff2c"/></svg>
<div class="ab" style="left:279px;top:582px;width:39px;height:19px;background:#fff;border:2px solid #ece9d8"></div>
<div class="t" style="left:279px;top:585.5px;width:36px;text-align:right;font-weight:bold;font-size:12px;letter-spacing:0.5px">99.9</div>
<div class="t" style="left:321px;top:586px;color:#fff">MHz</div>
<div class="ab" style="left:348px;top:580px;width:35px;height:23px;border:1px solid #003c74;border-radius:3px;background:linear-gradient(180deg,#fff 0,#f0f0ea 70%,#d6d0c5 100%)"></div>
<div class="t" style="left:348px;top:586px;width:35px;text-align:center"><u>S</u>ET</div>
<div class="ab" style="left:395px;top:573px;width:81px;height:37px;background:#00ee00;border:2px solid #000"></div>
<div class="t" style="left:395px;top:586px;width:81px;text-align:center;font-weight:bold;font-size:12px">READY</div>
<div class="t" style="left:496px;top:566.5px;font-weight:bold;font-size:12px;letter-spacing:0.1px">Frequency: 99.9 MHz, RF Level: 45.9 dB&micro;V</div>
<div class="t" style="left:496px;top:584.5px;font-weight:bold;font-size:12px;letter-spacing:0.1px">Sensitivity: Local</div>
<div class="t" style="left:608px;top:584.5px;font-weight:bold;font-size:12px;letter-spacing:0.1px">Measure Time: 00:24:09</div>
<div class="t" style="left:496px;top:602.5px;font-weight:bold;font-size:12px;letter-spacing:0.1px">Signal Quality:</div>
<div class="ab" style="left:580px;top:604px;width:169px;height:10px;border:1px solid #000;display:flex"><div style="flex:1;background:#4a0000"></div><div style="flex:1;background:#5a2800;border-left:1px solid #000"></div><div style="flex:1;background:#ffff00;border-left:1px solid #000"></div><div style="flex:1;background:#005000;border-left:1px solid #000"></div></div>
<div class="ab" style="left:798px;top:566px;width:55px;height:22px;border:1px solid #003c74;border-radius:3px;background:linear-gradient(180deg,#fff 0,#f3f3ef 60%,#e0ddd2 100%)"></div>
<svg class="ab" style="left:803px;top:569px" width="18" height="16"><rect x="4.5" y="0.5" width="9" height="7" fill="#d8e4f8" stroke="#506070"/><rect x="1.5" y="6.5" width="15" height="7" rx="2" fill="#c0c8d0" stroke="#404850"/><rect x="4.5" y="10.5" width="9" height="4" fill="#fff" stroke="#404850"/></svg>
<div class="t" style="left:823.5px;top:571.5px;font-size:12px;letter-spacing:-0.4px">Print</div>
<div class="ab" style="left:798px;top:594px;width:55px;height:22px;border:1px solid #003c74;border-radius:3px;background:linear-gradient(180deg,#fff 0,#f3f3ef 60%,#e0ddd2 100%)"></div>
<div class="t" style="left:798px;top:599px;width:55px;text-align:center;font-size:11px">Clear</div>
<div class="ab" style="left:860px;top:565px;width:65px;height:53px;border:1px solid #d0d0bf;border-radius:4px"></div>
<div class="t" style="left:866px;top:559px;padding:0 2px;background:#ECE9D8;color:#0046d5;font-weight:bold;font-size:12px;letter-spacing:-0.15px">Settings</div>
<div class="ab" style="left:878px;top:580px;width:28px;height:28px;border:1px solid #003c74;border-radius:3px;background:linear-gradient(180deg,#fff 0,#f3f3ef 60%,#e0ddd2 100%)"></div>
<svg class="ab" style="left:883px;top:585px" width="18" height="18"><rect x="5" y="1" width="8" height="3" fill="#3a88c0"/><path d="M5 5 H13 V9 H17 L9 17 L1 9 H5 Z" fill="#3a88c0"/></svg>
</body></html>
